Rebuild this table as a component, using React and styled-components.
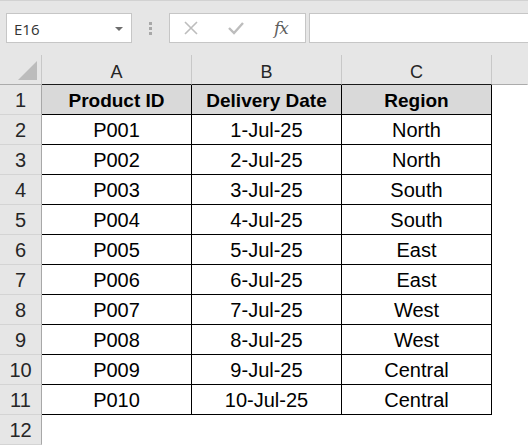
import React from "react";
import styled, { createGlobalStyle } from "styled-components";

const GlobalStyle = createGlobalStyle`
    html, body {
        margin: 0;
        padding: 0;
        background: #ffffff;
    }
    body {
        font-family: "Liberation Sans", Arial, sans-serif;
        overflow: hidden;
    }
`

const Window = styled.div`
    width: 528px;
    height: 445px;
    background: #ffffff;
    overflow: hidden;
`

const Toolbar = styled.div`
    display: flex;
    align-items: flex-start;
    height: 55px;
    box-sizing: border-box;
    padding: 12px 0 0 6px;
    background: #e6e6e6;
    border-top: 1px solid #d2d2d2;
`

const NameBox = styled.div`
    display: flex;
    align-items: center;
    justify-content: space-between;
    width: 126px;
    height: 30px;
    box-sizing: border-box;
    padding: 1px 8px 0 7px;
    background: #ffffff;
    border: 1px solid #c6c6c6;
    font-family: "Open Sans", "Noto Sans", sans-serif;
    font-size: 15px;
    color: #333333;
`

const Caret = styled.span`
    width: 0;
    height: 0;
    border-left: 4px solid transparent;
    border-right: 4px solid transparent;
    border-top: 4px solid #6d6d6d;
`

const Grip = styled.div`
    width: 37px;
    height: 30px;
    display: flex;
    flex-direction: column;
    align-items: center;
    justify-content: center;
    gap: 2px;

    span {
        width: 3px;
        height: 3px;
        background: #a8a8a8;
    }
`

const FormulaButtons = styled.div`
    display: flex;
    align-items: center;
    width: 137px;
    height: 30px;
    box-sizing: border-box;
    padding-left: 12px;
    background: #ffffff;
    border: 1px solid #c6c6c6;
`

const IconSlot = styled.div`
    width: ${p => p.$w}px;
    display: flex;
    align-items: center;
    justify-content: center;
`

const Fx = styled.span`
    font-family: "DejaVu Serif", "Liberation Serif", serif;
    font-style: italic;
    font-size: 17px;
    color: #5e5e5e;
    letter-spacing: -1px;
`

const FormulaInput = styled.div`
    flex: 1;
    height: 30px;
    margin-left: 3px;
    box-sizing: border-box;
    background: #ffffff;
    border: 1px solid #c6c6c6;
    border-right: none;
`

const Sheet = styled.div`
    display: grid;
    grid-template-columns: 42px 150px 150px 150px 1fr;
    grid-auto-rows: 30px;
`

const Corner = styled.div`
    position: relative;
    background: #e6e6e6;
    border-right: 1px solid #c8c8c8;
    border-bottom: 1px solid #ababab;

    &::after {
        content: "";
        position: absolute;
        right: 4px;
        bottom: 4px;
        width: 0;
        height: 0;
        border-left: 19px solid transparent;
        border-bottom: 19px solid #bcbcbc;
    }
`

const ColHead = styled.div`
    display: flex;
    align-items: center;
    justify-content: center;
    padding-top: 5px;
    box-sizing: border-box;
    background: #e6e6e6;
    border-right: 1px solid ${p => (p.$filler ? "transparent" : "#c8c8c8")};
    border-bottom: 1px solid ${p => (p.$inTable ? "#1a1a1a" : "#ababab")};
    font-size: 18px;
    color: #262626;
`

const RowHead = styled.div`
    display: flex;
    align-items: center;
    justify-content: center;
    padding-top: 2px;
    box-sizing: border-box;
    background: #e6e6e6;
    border-right: 1px solid #a8a8a8;
    border-bottom: 1px solid #d4d4d4;
    font-size: 20px;
    color: #262626;
`

const Cell = styled.div`
    display: flex;
    align-items: center;
    justify-content: center;
    padding-top: 2px;
    box-sizing: border-box;
    background: ${p => (p.$header ? "#d9d9d9" : "#ffffff")};
    border-right: 1px solid #000000;
    border-bottom: 1px solid #000000;
    font-size: ${p => (p.$header ? "19px" : "20px")};
    font-weight: ${p => (p.$header ? 700 : 400)};
    color: #000000;
    white-space: nowrap;
`

const Blank = styled.div`
    background: #ffffff;
`

const rows = [
    ["P001", "1-Jul-25", "North"],
    ["P002", "2-Jul-25", "North"],
    ["P003", "3-Jul-25", "South"],
    ["P004", "4-Jul-25", "South"],
    ["P005", "5-Jul-25", "East"],
    ["P006", "6-Jul-25", "East"],
    ["P007", "7-Jul-25", "West"],
    ["P008", "8-Jul-25", "West"],
    ["P009", "9-Jul-25", "Central"],
    ["P010", "10-Jul-25", "Central"],
]

const App = () => {
    return (
        <Window>
            <GlobalStyle />
            <Toolbar>
                <NameBox>
                    E16
                    <Caret />
                </NameBox>
                <Grip>
                    <span />
                    <span />
                    <span />
                </Grip>
                <FormulaButtons>
                    <IconSlot $w={18}>
                        <svg width="16" height="16" viewBox="0 0 16 16">
                            <path d="M2 2 L14 14 M14 2 L2 14" stroke="#bdbdbd" strokeWidth="1.6" fill="none" />
                        </svg>
                    </IconSlot>
                    <IconSlot $w={72}>
                        <svg width="18" height="16" viewBox="0 0 18 16">
                            <path d="M2 8 L7 13 L16 3" stroke="#bdbdbd" strokeWidth="2.4" fill="none" />
                        </svg>
                    </IconSlot>
                    <IconSlot $w={18}>
                        <Fx>fx</Fx>
                    </IconSlot>
                </FormulaButtons>
                <FormulaInput />
            </Toolbar>

            <Sheet>
                <Corner />
                <ColHead $inTable>A</ColHead>
                <ColHead $inTable>B</ColHead>
                <ColHead $inTable>C</ColHead>
                <ColHead $filler />

                <RowHead>1</RowHead>
                <Cell $header>Product ID</Cell>
                <Cell $header>Delivery Date</Cell>
                <Cell $header>Region</Cell>
                <Blank />

                {rows.map((r, i) => (
                    <React.Fragment key={r[0]}>
                        <RowHead>{i + 2}</RowHead>
                        <Cell>{r[0]}</Cell>
                        <Cell>{r[1]}</Cell>
                        <Cell>{r[2]}</Cell>
                        <Blank />
                    </React.Fragment>
                ))}

                <RowHead>12</RowHead>
                <Blank />
                <Blank />
                <Blank />
                <Blank />
            </Sheet>
        </Window>
    )
}

export default App;
